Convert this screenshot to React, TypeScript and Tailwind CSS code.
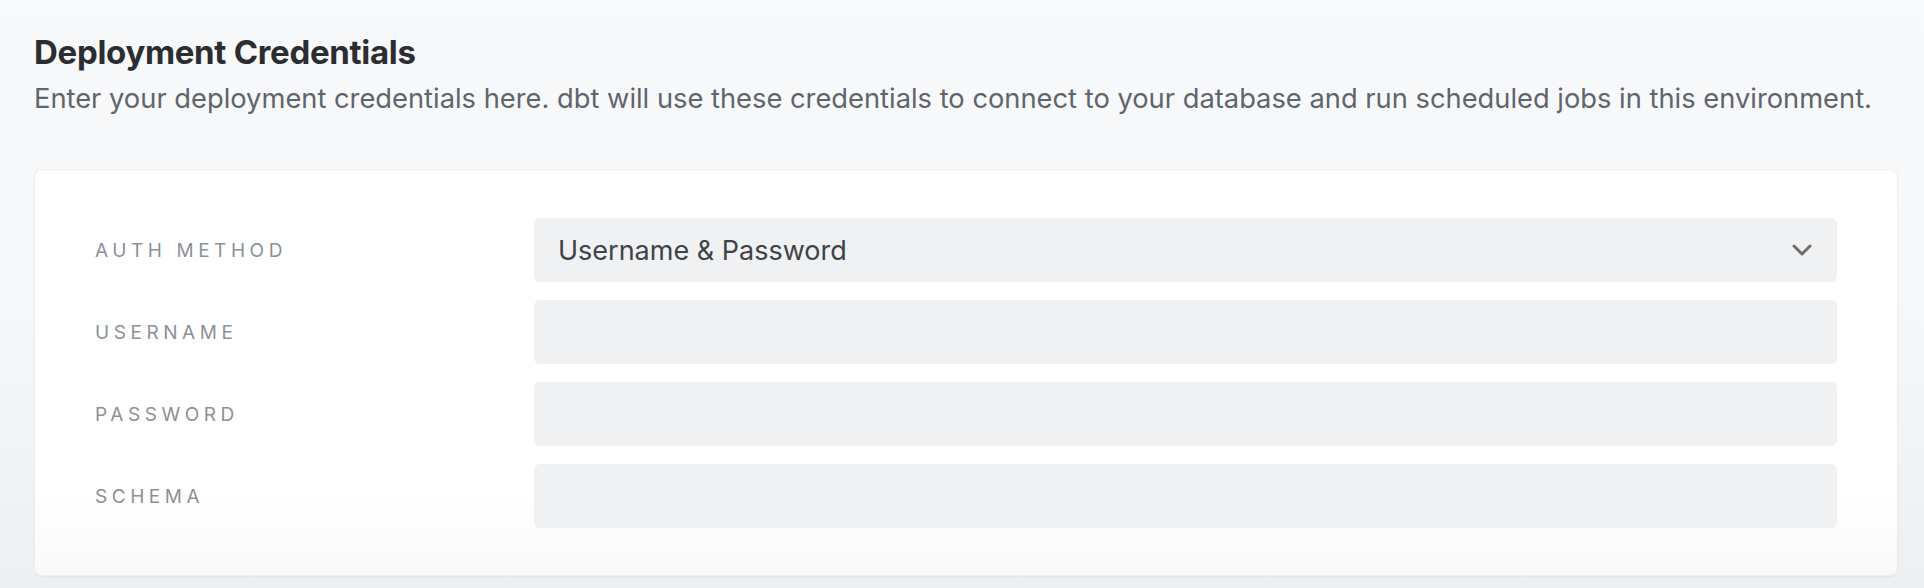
import React from "react";

function Chevron() {
  return (
    <svg width="20" height="12" viewBox="0 0 20 12" fill="none">
      <path d="M2 2 L10 10 L18 2" stroke="#6e6e6e" strokeWidth="3" strokeLinecap="round" strokeLinejoin="round" />
    </svg>
  );
}

export default function App() {
  const rows = ["USERNAME", "PASSWORD", "SCHEMA"];
  return (
    <div className="w-full h-[588px] overflow-hidden bg-gradient-to-b from-[#f8f9fb] via-[#f7f8fa] to-[#eeeff1] pl-[34px] pr-[26px] pt-[33px] font-['Inter',sans-serif]">
      <h1 className="text-[33px] leading-[38px] font-bold text-[#2b2d31] tracking-[-0.3px]">
        Deployment Credentials
      </h1>
      <p className="mt-[11px] text-[27.3px] leading-[34px] text-[#5f656c]">
        Enter your deployment credentials here. dbt will use these credentials to connect to your database and run scheduled jobs in this environment.
      </p>
      <div className="mt-[53px] rounded-lg border border-[#eceef1] bg-gradient-to-b from-white from-80% to-[#f9f9f9] shadow-[0_1px_2px_rgba(0,0,0,0.06)] pl-[60px] pr-[60px] pt-[48px] pb-[47px]">
        <div className="grid grid-cols-[439px_1fr] gap-y-[18px]">
          <div className="flex items-center h-[64px] pt-[3px] text-[19px] tracking-[0.24em] text-[#8a9199]">AUTH METHOD</div>
          <div className="flex items-center justify-between h-[64px] rounded-md bg-[#f0f1f3] pl-[24px] pr-[25px]">
            <span className="pt-[3px] text-[27px] text-[#3f4347]">Username &amp; Password</span>
            <Chevron />
          </div>
          {rows.map((r) => (
            <React.Fragment key={r}>
              <div className="flex items-center h-[64px] pt-[3px] text-[19px] tracking-[0.24em] text-[#8a9199]">{r}</div>
              <div className="h-[64px] rounded-md bg-[#f0f1f3]" />
            </React.Fragment>
          ))}
        </div>
      </div>
    </div>
  );
}
